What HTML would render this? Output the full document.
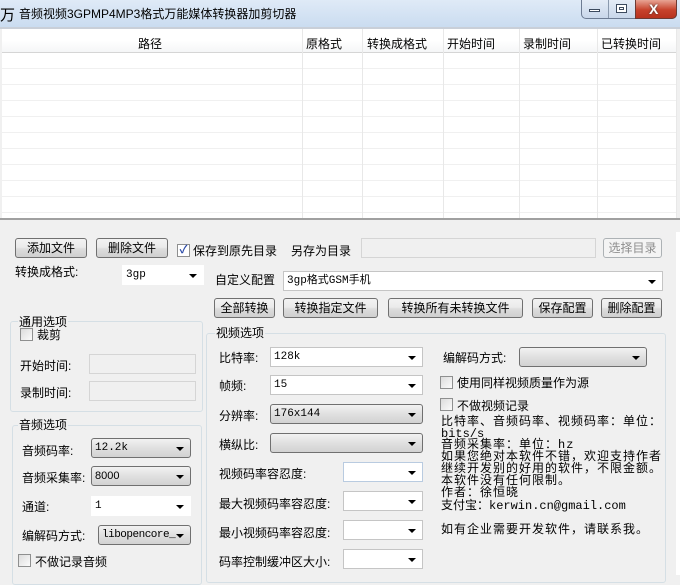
<!DOCTYPE html>
<html><head><meta charset="utf-8"><style>
*{margin:0;padding:0;box-sizing:border-box}
body{width:680px;height:575px;overflow:hidden;background:#f0f0f0;font-family:"Liberation Sans","Noto Sans CJK SC",sans-serif;font-size:12px;color:#000;position:relative}
.a{position:absolute;white-space:nowrap}
.title{left:0;top:0;width:680px;height:27px;background:linear-gradient(#dfeaf7,#cadcf0);}
.btn{position:absolute;height:20px;border:1px solid #707070;border-radius:3px;background:linear-gradient(#f2f2f2 0%,#ebebeb 45%,#dddddd 55%,#cfcfcf 100%);text-align:center;line-height:18px;font-size:12px}
.inp{position:absolute;background:#fff;border:1px solid #abadb3;}
.dis{background:#f0f0f0;border:1px solid #d5d5d5}
.sel{position:absolute;background:#fff;border:1px solid #c5c5c5;font-family:"Liberation Mono","Noto Sans CJK SC",monospace;font-size:11px;line-height:18px;padding-left:3px}
.sel:after{content:"";position:absolute;right:6px;top:8px;border-left:4px solid transparent;border-right:4px solid transparent;border-top:4px solid #000}
.gs{background:linear-gradient(#f2f2f2,#e0e0e0 50%,#d2d2d2);border:1px solid #707070;border-radius:3px}
.cb{position:absolute;width:13px;height:13px;border:1px solid #8e8f8f;background:linear-gradient(135deg,#dcdcdc,#fbfbfb)}
.grp{position:absolute;border:1px solid #d5dfe5;border-radius:3px}
.lbl{position:absolute;background:#f0f0f0;padding:0 1px}
.info{position:absolute;left:441px;font-family:"Liberation Mono","Noto Sans CJK SC",monospace;font-size:12px;line-height:12px;white-space:nowrap;letter-spacing:1px}
.info.m{letter-spacing:0}
</style></head><body>
<div class="a title"></div>
<div class="a" style="left:0;top:4px;font-size:15px;font-family:'Noto Sans CJK SC',sans-serif">万</div>
<div class="a" style="left:19px;top:5px;font-size:12px">音频视频3GPMP4MP3格式万能媒体转换器加剪切器</div>
<div class="a" style="left:581px;top:0;width:96px;height:19px;border:1px solid #6d7c93;border-top:none;border-radius:0 0 5px 5px;background:linear-gradient(#e4ecf6,#c9d7ea)"></div>
<div class="a" style="left:608px;top:0;width:1px;height:18px;background:#8a99ad"></div>
<div class="a" style="left:635px;top:0;width:42px;height:19px;border-radius:0 0 5px 0;background:linear-gradient(#e8a494,#c7422c 55%,#b8321e);border:1px solid #6d3a33;border-top:none"></div>
<div class="a" style="left:589px;top:9px;width:11px;height:3px;border:1px solid #3c4a5e;background:#fff"></div>
<div class="a" style="left:616px;top:4px;width:11px;height:9px;border:1px solid #3c4a5e;background:#fff"><div style="margin:2px;height:3px;border:1px solid #3c4a5e"></div></div>
<div class="a" style="left:649px;top:1px;color:#fff;font-weight:bold;font-size:14px;text-shadow:0 0 2px #333">X</div>
<!-- list -->
<div class="a" style="left:0;top:27px;width:680px;height:2px;background:#c9cfd8"></div>
<div class="a" style="left:2px;top:29px;width:675px;height:24px;background:linear-gradient(#fff,#fff 50%,#f5f6f7);border-bottom:1px solid #d5d5d5"></div>
<div class="a" style="left:2px;top:53px;width:675px;height:165px;background:repeating-linear-gradient(#fff 0 15px,#f0f0f0 15px 16px)"></div>
<div class="a" style="left:302px;top:29px;width:1px;height:189px;background:#e8e8e8"></div>
<div class="a" style="left:362px;top:29px;width:1px;height:189px;background:#e8e8e8"></div>
<div class="a" style="left:443px;top:29px;width:1px;height:189px;background:#e8e8e8"></div>
<div class="a" style="left:519px;top:29px;width:1px;height:189px;background:#e8e8e8"></div>
<div class="a" style="left:597px;top:29px;width:1px;height:189px;background:#e8e8e8"></div>
<div class="a" style="left:676px;top:29px;width:1px;height:189px;background:#e8e8e8"></div>
<div class="a" style="left:138px;top:35px">路径</div>
<div class="a" style="left:306px;top:35px">原格式</div>
<div class="a" style="left:367px;top:35px">转换成格式</div>
<div class="a" style="left:447px;top:35px">开始时间</div>
<div class="a" style="left:523px;top:35px">录制时间</div>
<div class="a" style="left:601px;top:35px">已转换时间</div>
<div class="a" style="left:0;top:218px;width:680px;height:2px;background:#a0a0a0"></div>
<div class="a" style="left:676px;top:232px;width:4px;height:343px;background:#fff"></div>
<!-- row 1 -->
<div class="btn" style="left:15px;top:238px;width:72px">添加文件</div>
<div class="btn" style="left:96px;top:238px;width:72px">删除文件</div>
<div class="cb" style="left:177px;top:244px;background:#fff;color:#2b4aa8;font-size:11px;line-height:11px;text-align:center;font-weight:bold">✓</div>
<div class="a" style="left:193px;top:242px">保存到原先目录</div>
<div class="a" style="left:291px;top:242px">另存为目录</div>
<div class="inp dis" style="left:361px;top:238px;width:235px;height:20px"></div>
<div class="btn" style="left:603px;top:238px;width:59px;color:#8d8d8d;border-color:#adb2b5;background:#f4f4f4">选择目录</div>
<div class="a" style="left:15px;top:263px">转换成格式:</div>
<div class="sel" style="left:122px;top:265px;width:82px;height:20px;border-color:#fff">3gp</div>
<div class="a" style="left:215px;top:271px">自定义配置</div>
<div class="sel" style="left:283px;top:271px;width:380px;height:20px">3gp格式GSM手机</div>
<div class="btn" style="left:214px;top:298px;width:61px">全部转换</div>
<div class="btn" style="left:283px;top:298px;width:95px">转换指定文件</div>
<div class="btn" style="left:388px;top:298px;width:135px">转换所有未转换文件</div>
<div class="btn" style="left:532px;top:298px;width:61px">保存配置</div>
<div class="btn" style="left:601px;top:298px;width:61px">删除配置</div>
<!-- general -->
<div class="grp" style="left:10px;top:321px;width:193px;height:91px"></div>
<div class="lbl" style="left:18px;top:313px">通用选项</div>
<div class="cb" style="left:20px;top:328px"></div>
<div class="a" style="left:37px;top:326px">裁剪</div>
<div class="a" style="left:20px;top:357px">开始时间:</div>
<div class="inp dis" style="left:89px;top:354px;width:107px;height:20px"></div>
<div class="a" style="left:20px;top:384px">录制时间:</div>
<div class="inp dis" style="left:89px;top:381px;width:107px;height:20px"></div>
<!-- audio -->
<div class="grp" style="left:12px;top:425px;width:190px;height:160px"></div>
<div class="lbl" style="left:18px;top:416px">音频选项</div>
<div class="a" style="left:22px;top:442px">音频码率:</div>
<div class="sel gs" style="left:91px;top:438px;width:100px;height:20px">12.2k</div>
<div class="a" style="left:22px;top:469px">音频采集率:</div>
<div class="sel gs" style="left:91px;top:466px;width:100px;height:20px;font-family:'Liberation Sans',sans-serif">8000</div>
<div class="a" style="left:22px;top:498px">通道:</div>
<div class="sel" style="left:91px;top:496px;width:100px;height:20px;border-color:#fff">1</div>
<div class="a" style="left:22px;top:527px">编解码方式:</div>
<div class="sel gs" style="left:98px;top:525px;width:93px;height:20px;letter-spacing:-0.5px">libopencore_</div>
<div class="cb" style="left:18px;top:554px"></div>
<div class="a" style="left:35px;top:553px">不做记录音频</div>
<!-- video -->
<div class="grp" style="left:206px;top:333px;width:460px;height:250px"></div>
<div class="lbl" style="left:215px;top:324px">视频选项</div>
<div class="a" style="left:219px;top:349px">比特率:</div>
<div class="sel" style="left:270px;top:347px;width:153px;height:20px">128k</div>
<div class="a" style="left:219px;top:377px">帧频:</div>
<div class="sel" style="left:270px;top:375px;width:153px;height:20px">15</div>
<div class="a" style="left:219px;top:407px">分辨率:</div>
<div class="sel gs" style="left:270px;top:404px;width:153px;height:20px">176x144</div>
<div class="a" style="left:219px;top:436px">横纵比:</div>
<div class="sel gs" style="left:270px;top:433px;width:153px;height:20px"></div>
<div class="a" style="left:219px;top:465px">视频码率容忍度:</div>
<div class="sel" style="left:343px;top:462px;width:80px;height:20px;border-color:#b9cbe0"></div>
<div class="a" style="left:219px;top:495px">最大视频码率容忍度:</div>
<div class="sel" style="left:343px;top:491px;width:80px;height:20px"></div>
<div class="a" style="left:219px;top:524px">最小视频码率容忍度:</div>
<div class="sel" style="left:343px;top:520px;width:80px;height:20px"></div>
<div class="a" style="left:219px;top:553px">码率控制缓冲区大小:</div>
<div class="sel" style="left:343px;top:549px;width:80px;height:20px"></div>
<div class="a" style="left:443px;top:349px">编解码方式:</div>
<div class="sel gs" style="left:519px;top:347px;width:128px;height:20px"></div>
<div class="cb" style="left:440px;top:376px"></div>
<div class="a" style="left:457px;top:374px">使用同样视频质量作为源</div>
<div class="cb" style="left:440px;top:398px"></div>
<div class="a" style="left:457px;top:397px">不做视频记录</div>
<div class="info" style="top:416px">比特率、音频码率、视频码率：单位：</div>
<div class="info m" style="top:428px">bits/s</div>
<div class="info" style="top:439px">音频采集率：单位：hz</div>
<div class="info" style="top:451px">如果您绝对本软件不错，欢迎支持作者</div>
<div class="info" style="top:463px">继续开发别的好用的软件，不限金额。</div>
<div class="info" style="top:475px">本软件没有任何限制。</div>
<div class="info" style="top:487px">作者：徐恒晓</div>
<div class="info m" style="top:500px">支付宝：kerwin.cn@gmail.com</div>
<div class="info" style="top:524px">如有企业需要开发软件，请联系我。</div>
</body></html>
